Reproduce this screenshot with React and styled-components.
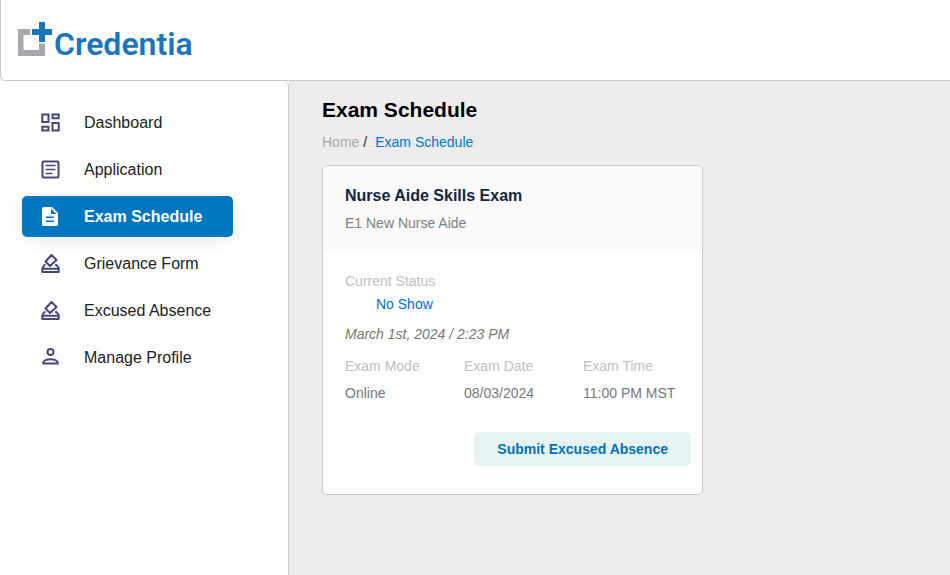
import React from "react";
import styled, { createGlobalStyle, css } from "styled-components";

const GlobalStyle = createGlobalStyle`
  *, *::before, *::after { box-sizing: border-box; }
  body {
    margin: 0;
    background: #fff;
    font-family: "Liberation Sans", Arial, sans-serif;
    font-size: 14px;
    line-height: 20px;
  }
  h1, h2, p, ul, ol, dl, dd { margin: 0; padding: 0; }
  ul, ol { list-style: none; }
  a { color: inherit; text-decoration: none; }
`;

const Page = styled.div`
  display: flex;
  flex-direction: column;
  min-height: 100vh;
`;

const Header = styled.header`
  display: flex;
  align-items: center;
  padding: 18px 16px 20px;
  background: #fff;
  border: 1px solid #c8c8c8;
  border-width: 0 0 1px 1px;
  border-bottom-left-radius: 5px;
`;

const Logo = styled.a`
  display: flex;
  align-items: flex-start;
  height: 42px;
  gap: 2px;
  color: #1b75bc;
`;

const LogoMark = styled.svg`
  width: 35px;
  height: 42px;
`;

const LogoName = styled.span`
  padding-top: 5px;
  font: 600 32px/42px Roboto, sans-serif;
`;

const Body = styled.div`
  display: flex;
  flex: 1;
`;

const Sidebar = styled.nav`
  flex: 0 0 289px;
  padding: 21px 55px 21px 22px;
  background: #fff;
  border-right: 1px solid #c8c8c8;
  border-top-right-radius: 5px;
`;

const NavList = styled.ul`
  display: flex;
  flex-direction: column;
  gap: 6px;
`;

const NavIcon = styled.svg`
  flex: none;
  width: 24px;
  height: 25px;
  fill: none;
  stroke: currentColor;
  stroke-width: 2;
  color: #464678;
`;

const NavLink = styled.a`
  display: flex;
  align-items: center;
  gap: 22px;
  height: 41px;
  padding: 0 16px;
  border-radius: 5px;
  font-size: 16px;
  color: #212121;
  white-space: nowrap;

  ${({ $active }) =>
    $active &&
    css`
      background: #0075c0;
      color: #fff;
      font-weight: 700;
      box-shadow: 0 4px 20px rgba(0, 0, 0, 0.08);
      ${NavIcon} {
        color: #fff;
      }
    `}
`;

const Main = styled.main`
  flex: 1;
  min-width: 0;
  padding: 17px 33px 33px;
  background: #ededed;
`;

const Title = styled.h1`
  font-size: 21px;
  line-height: 24px;
  color: #000;
`;

const Breadcrumb = styled.ol`
  display: flex;
  margin: 10px 0 13px;
  color: #a6a6a6;
`;

const Separator = styled.li`
  padding: 0 8px 0 4px;
  color: #222;
`;

const Current = styled.a`
  color: #0075c0;
`;

const Card = styled.article`
  max-width: 381px;
  overflow: hidden;
  background: #fff;
  border: 1px solid #c8c8c8;
  border-radius: 5px;
`;

const CardHeader = styled.header`
  padding: 20px 22px 18px;
  background: #fafafa;
`;

const CardTitle = styled.h2`
  font-size: 16px;
  line-height: 20px;
  color: #132440;
`;

const CardSubtitle = styled.p`
  margin-top: 7px;
  color: #808080;
`;

const CardBody = styled.div`
  padding: 20px 11px 28px 22px;
`;

const Label = styled.dt`
  color: #c0c0c0;
`;

const Status = styled.dd`
  margin-top: 3px;
  padding-left: 31px;
  color: #0071bc;
`;

const StatusTime = styled.p`
  margin: 10px 0 12px;
  font-style: italic;
  color: #777;
`;

const Facts = styled.dl`
  display: grid;
  grid-template-columns: 119px 119px 1fr;
`;

const Value = styled.dd`
  margin-top: 7px;
  color: #777;
`;

const Actions = styled.div`
  display: flex;
  justify-content: flex-end;
  margin-top: 29px;
`;

const Button = styled.button`
  height: 34px;
  padding: 0 23px;
  border: 0;
  border-radius: 5px;
  background: #e8f4f4;
  color: #0071bc;
  font: 700 14px/20px "Liberation Sans", Arial, sans-serif;
  cursor: pointer;
`;

const dashboardIcon = (
  <path d="M4.300 4.500H10.500V12H4.300ZM14.500 4.500H20.700V8.200H14.500ZM4.300 16.800H10.500V20.500H4.300ZM14.500 13H20.700V20.500H14.500Z" />
);

const articleIcon = (
  <>
    <rect x="4.500" y="4.500" width="16" height="16" rx="1" />
    <path d="M7.500 8.500H17.500M7.500 12.500H17.500M7.500 16.500H14.500" strokeWidth="1.600" />
  </>
);

const documentIcon = (
  <path
    d="M6 3H14L20 9V20.500Q20 22 18.500 22H5.500Q4 22 4 20.500V4.500Q4 3 6 3ZM13 4.500V10H18.500ZM8 12.500V14H16V12.500ZM8 16.500V18H16V16.500Z"
    fill="currentColor"
    fillRule="evenodd"
    stroke="none"
  />
);

const ballotIcon = (
  <>
    <path d="M13.500 4L18.500 9L12 15L7.500 10.500Z" strokeLinejoin="round" />
    <path d="M7.500 14H6.500L4.300 17V21H20.700V17L18.500 14H17M4.300 17.700H20.700" strokeLinejoin="round" />
  </>
);

const personIcon = (
  <>
    <circle cx="12.500" cy="7" r="3" />
    <path d="M5.300 18.500V17.500C5.300 15.500 9 14.300 12.500 14.300S19.700 15.500 19.700 17.500V18.500Z" />
  </>
);

const navItems = [
  { label: "Dashboard", icon: dashboardIcon },
  { label: "Application", icon: articleIcon },
  { label: "Exam Schedule", icon: documentIcon, active: true },
  { label: "Grievance Form", icon: ballotIcon },
  { label: "Excused Absence", icon: ballotIcon },
  { label: "Manage Profile", icon: personIcon },
];

const facts = [
  { label: "Exam Mode", value: "Online" },
  { label: "Exam Date", value: "08/03/2024" },
  { label: "Exam Time", value: "11:00 PM MST" },
];

export default function App() {
  return (
    <>
      <GlobalStyle />
      <Page>
        <Header>
          <Logo href="#">
            <LogoMark viewBox="0 0 35 42" aria-hidden="true">
              <path d="M1 11H13V17H6.500V32H22V25.500H28V38H1Z" fill="#a7a9ac" />
              <path d="M22 4H28V11H35V17H28V24H22V17H15V11H22Z" fill="#1b75bc" />
            </LogoMark>
            <LogoName>Credentia</LogoName>
          </Logo>
        </Header>
        <Body>
          <Sidebar aria-label="Main">
            <NavList>
              {navItems.map(({ label, icon, active }) => (
                <li key={label}>
                  <NavLink href="#" $active={active} aria-current={active ? "page" : undefined}>
                    <NavIcon viewBox="0 0 24 25" aria-hidden="true">{icon}</NavIcon>
                    {label}
                  </NavLink>
                </li>
              ))}
            </NavList>
          </Sidebar>
          <Main>
            <Title>Exam Schedule</Title>
            <Breadcrumb aria-label="Breadcrumb">
              <li><a href="#">Home</a></li>
              <Separator aria-hidden="true">/</Separator>
              <li><Current href="#" aria-current="page">Exam Schedule</Current></li>
            </Breadcrumb>
            <Card>
              <CardHeader>
                <CardTitle>Nurse Aide Skills Exam</CardTitle>
                <CardSubtitle>E1 New Nurse Aide</CardSubtitle>
              </CardHeader>
              <CardBody>
                <dl>
                  <Label>Current Status</Label>
                  <Status>No Show</Status>
                </dl>
                <StatusTime>March 1st, 2024 / 2:23 PM</StatusTime>
                <Facts>
                  {facts.map(({ label, value }) => (
                    <div key={label}>
                      <Label>{label}</Label>
                      <Value>{value}</Value>
                    </div>
                  ))}
                </Facts>
                <Actions>
                  <Button type="button">Submit Excused Absence</Button>
                </Actions>
              </CardBody>
            </Card>
          </Main>
        </Body>
      </Page>
    </>
  );
}
